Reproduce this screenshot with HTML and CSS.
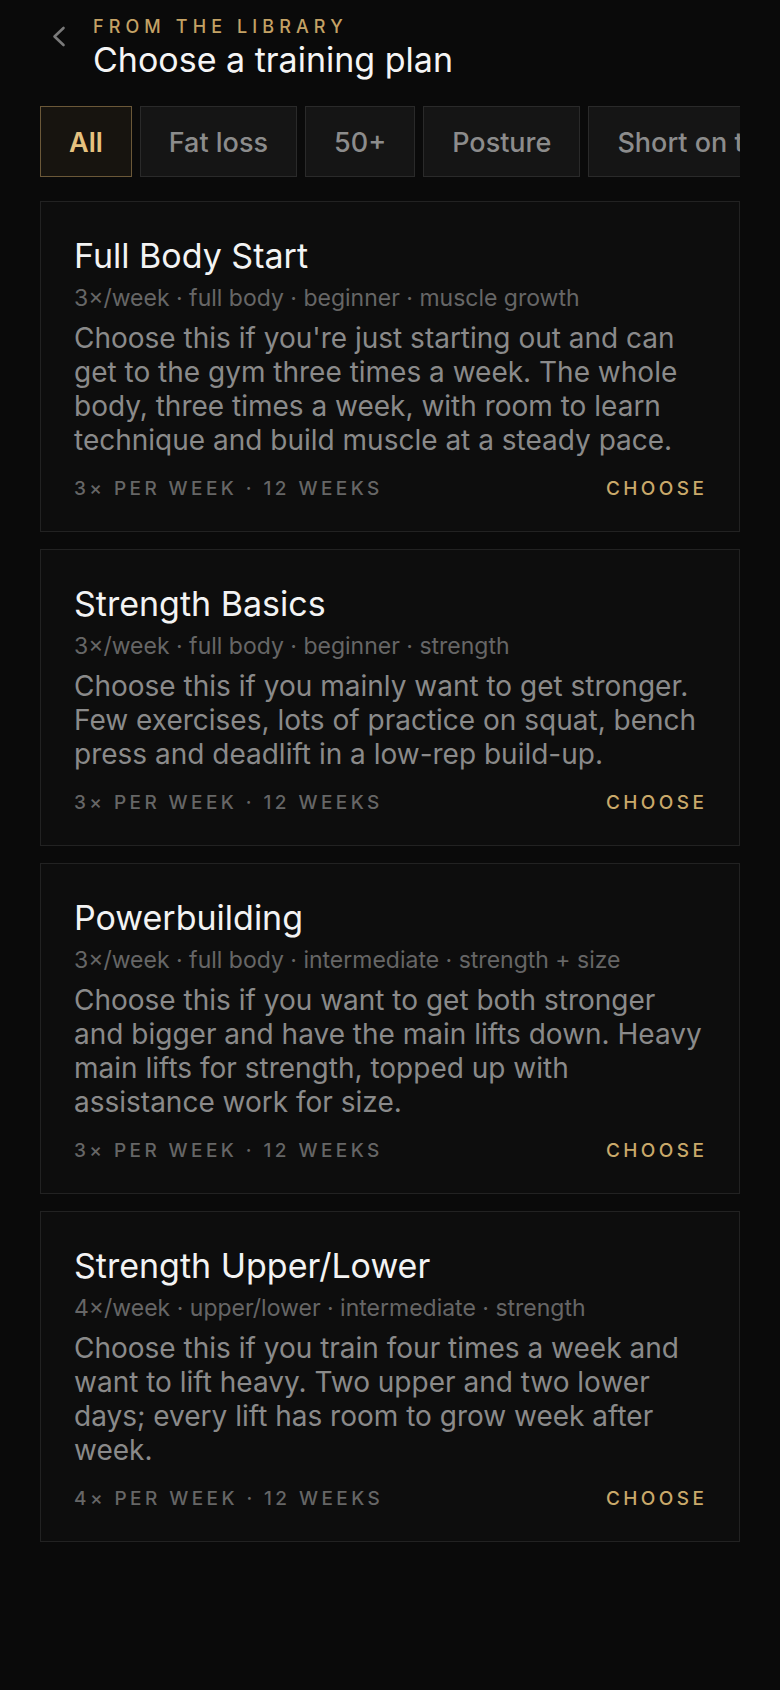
FILE: index.html
```html
<!DOCTYPE html>
<html lang="en">
<head>
<meta charset="utf-8">
<title>Choose a training plan</title>
<link rel="stylesheet" href="styles.css">
</head>
<body>
<main class="page">
  <header class="header">
    <button class="back" aria-label="Back">
      <svg width="16" height="22" viewBox="0 0 16 22" fill="none"><polyline points="12.5,2 3.5,10.5 12.5,19" stroke="#7a7a7a" stroke-width="2.6" stroke-linecap="round" stroke-linejoin="round"/></svg>
    </button>
    <div class="heading">
      <div class="eyebrow">FROM THE LIBRARY</div>
      <h1 class="title">Choose a training plan</h1>
    </div>
  </header>

  <nav class="filters">
    <button class="pill active">All</button>
    <button class="pill">Fat loss</button>
    <button class="pill">50+</button>
    <button class="pill">Posture</button>
    <button class="pill">Short on time</button>
  </nav>

  <section class="plans">
    <article class="card">
      <h2 class="card-title">Full Body Start</h2>
      <div class="meta">3×/week · full body · beginner · muscle growth</div>
      <p class="desc">Choose this if you're just starting out and can get to the gym three times a week. The whole body, three times a week, with room to learn technique and build muscle at a steady pace.</p>
      <div class="foot"><span class="freq">3× PER WEEK · 12 WEEKS</span><span class="choose">CHOOSE</span></div>
    </article>
    <article class="card">
      <h2 class="card-title">Strength Basics</h2>
      <div class="meta">3×/week · full body · beginner · strength</div>
      <p class="desc">Choose this if you mainly want to get stronger. Few exercises, lots of practice on squat, bench press and deadlift in a low-rep build-up.</p>
      <div class="foot"><span class="freq">3× PER WEEK · 12 WEEKS</span><span class="choose">CHOOSE</span></div>
    </article>
    <article class="card">
      <h2 class="card-title">Powerbuilding</h2>
      <div class="meta">3×/week · full body · intermediate · strength + size</div>
      <p class="desc">Choose this if you want to get both stronger and bigger and have the main lifts down. Heavy main lifts for strength, topped up with assistance work for size.</p>
      <div class="foot"><span class="freq">3× PER WEEK · 12 WEEKS</span><span class="choose">CHOOSE</span></div>
    </article>
    <article class="card">
      <h2 class="card-title">Strength Upper/Lower</h2>
      <div class="meta">4×/week · upper/lower · intermediate · strength</div>
      <p class="desc">Choose this if you train four times a week and want to lift heavy. Two upper and two lower days; every lift has room to grow week after week.</p>
      <div class="foot"><span class="freq">4× PER WEEK · 12 WEEKS</span><span class="choose">CHOOSE</span></div>
    </article>
  </section>
</main>
</body>
</html>
```

FILE: styles.css
```css
* { box-sizing: border-box; }
html, body {
  margin: 0;
  padding: 0;
  background: #0a0a0a;
}
body {
  font-family: Inter, "Noto Sans", "Liberation Sans", sans-serif;
  color: #f2f2f2;
  min-height: 1690px;
}
.page {
  padding: 16px 40px 40px 40px;
}
.header {
  display: flex;
  align-items: flex-start;
  padding-left: 11px;
}
.back {
  background: none;
  border: 0;
  padding: 0;
  margin-top: 10px;
  width: 16px;
  height: 22px;
  display: block;
}
.back svg { display: block; }
.heading {
  margin-left: 26px;
}
.eyebrow {
  font-size: 18px;
  line-height: 22px;
  letter-spacing: 5.1px;
  color: #c4a265;
  font-weight: 500;
}
.title {
  margin: 2px 0 0 0;
  font-size: 34px;
  line-height: 40px;
  font-weight: 400;
  color: #f5f5f5;
}
.filters {
  display: flex;
  gap: 8px;
  overflow: hidden;
  margin-top: 26px;
}
.pill {
  flex: 0 0 auto;
  font-family: inherit;
  font-size: 27px;
  line-height: 31px;
  font-weight: 500;
  padding: 20px 28px 18px 28px;
  background: #151515;
  border: 1px solid #2a2a2a;
  color: #8c8c8c;
  border-radius: 0;
  white-space: nowrap;
}
.pill.active {
  background: #17140f;
  border-color: #6b5838;
  color: #e6c27f;
  font-weight: 600;
}
.plans {
  margin-top: 24px;
  display: flex;
  flex-direction: column;
  gap: 17px;
}
.card {
  background: #0d0d0d;
  border: 1px solid #222222;
  padding: 34px 35px 30px 33px;
}
.card-title {
  margin: 0;
  font-size: 34px;
  line-height: 40px;
  font-weight: 400;
  color: #f3f3f3;
}
.meta {
  margin-top: 8px;
  font-size: 23px;
  line-height: 28px;
  color: #666666;
}
.desc {
  margin: 9px 0 0 0;
  font-size: 28px;
  line-height: 34px;
  color: #8a8a8a;
}
.foot {
  margin-top: 20px;
  display: flex;
  justify-content: space-between;
  align-items: baseline;
  font-size: 19px;
  line-height: 24px;
  letter-spacing: 0.18em;
  font-weight: 500;
}
.freq { color: #666666; }
.choose { color: #c9a96a; margin-right: -0.18em; }
```
